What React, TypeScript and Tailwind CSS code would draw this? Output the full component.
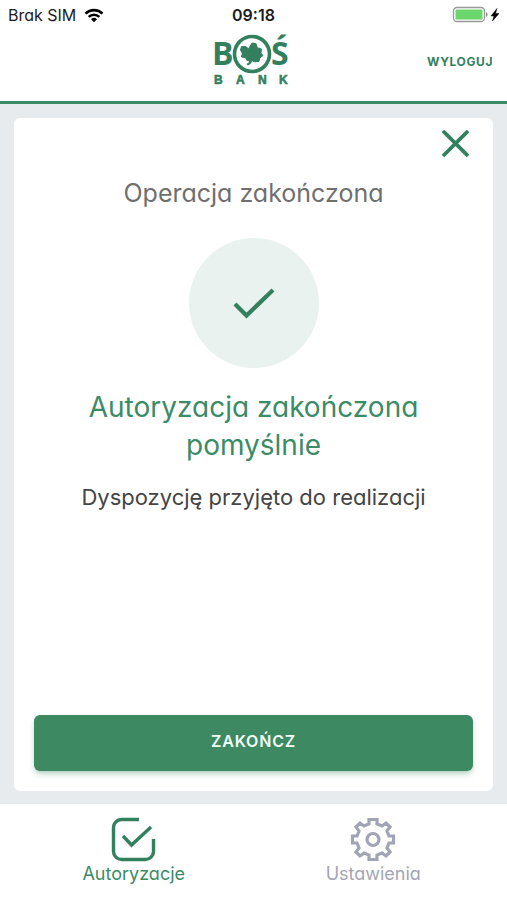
import React from 'react'

function StatusBar() {
  return (
    <div className="grid h-[30px] grid-cols-3 items-center px-2 text-base text-[#1c1c1c]">
      <div className="flex items-center gap-2">
        <span>Brak SIM</span>
        <svg width="20" height="15" viewBox="0 0 20 15" fill="none" aria-hidden="true">
          <path d="M1.5 5.6a12.2 12.2 0 0 1 17 0" stroke="#000" strokeWidth="2.6" />
          <path d="M4.7 8.9a7.6 7.6 0 0 1 10.6 0" stroke="#000" strokeWidth="2.5" />
          <path d="M10 14.2 7 11.3a4.3 4.3 0 0 1 6 0z" fill="#000" />
        </svg>
      </div>
      <span className="text-center font-semibold">09:18</span>
      <svg
        className="justify-self-end"
        width="48"
        height="18"
        viewBox="0 0 48 18"
        aria-hidden="true"
      >
        <rect x="2.5" y="1.5" width="31" height="14" rx="3.5" fill="#fff" stroke="#999" strokeWidth="1.3" />
        <rect x="4.5" y="3.5" width="27" height="10" rx="1" fill="#6bd66b" />
        <path d="M35 6c2 .8 2 4.2 0 5z" fill="#888" />
        <path d="m46 2.500-6 7.500h3l-1.500 5 6.500-7.500h-3.500z" fill="#000" stroke="#000" strokeWidth=".5" />
      </svg>
    </div>
  )
}

function Logo() {
  return (
    <svg width="84" height="60" viewBox="0 0 84 60" role="img" aria-label="BOŚ Bank" fill="#33805f">
      <g fontFamily="'Open Sans', sans-serif" fontWeight="700" fontSize="32">
        <text x="1" y="35">B</text>
        <text x="60" y="35">Ś</text>
      </g>
      <circle cx="41" cy="24" r="17.5" fill="#fff" stroke="#33805f" strokeWidth="3.6" />
      <path
        d="M30.500 16.500h4.500l2.500 2.500 3.500-6 4 .5 1.300 4.200 4.200 1.300-.6 4 2.100 2.500-3.200 2.500-.8 3.500-4.500.3-3-1.300c.3 2-1.500 4-3.800 4.300l-.8-.7c1.500-.3 2.700-1.500 2.800-3.100l-3-.8-1.200-2.700-4-.5.8-3.700-1.800-3.300z"
        stroke="#33805f"
        strokeWidth="1"
        strokeLinejoin="round"
      />
      <text
        x="3 25 47 68"
        y="54"
        fontFamily="'Liberation Sans', sans-serif"
        fontWeight="700"
        fontSize="12"
        stroke="#33805f"
        strokeWidth=".6"
      >
        BANK
      </text>
    </svg>
  )
}

function Header() {
  return (
    <header className="grid h-[74px] grid-cols-3 items-center border-b-3 border-[#3c8b67] px-[14px]">
      <div className="col-start-2 flex justify-center self-start">
        <Logo />
      </div>
      <button
        type="button"
        className="justify-self-end pb-2 text-xs font-bold tracking-wider text-[#33805f]"
      >
        WYLOGUJ
      </button>
    </header>
  )
}

function ResultCard() {
  return (
    <section className="flex flex-1 flex-col rounded-md bg-white px-5 pt-3 pb-5 text-center">
      <button type="button" aria-label="Zamknij" className="mr-1 self-end">
        <svg width="28" height="28" viewBox="0 0 28 28" stroke="#33805f" strokeWidth="3.8">
          <path d="m2 1 25 25M27 1 2 26" />
        </svg>
      </button>
      <h1 className="mt-4 text-[25px] leading-[38px] text-[#6f6f6f]">Operacja zakończona</h1>
      <div className="mt-[26px] flex size-[130px] items-center justify-center self-center rounded-full bg-[#e9f2ef]">
        <svg width="42" height="32" viewBox="0 0 42 32" fill="none" stroke="#33805f" strokeWidth="4.2" aria-hidden="true">
          <path d="m2 17 11.5 11.5L40 3" />
        </svg>
      </div>
      <h2 className="mx-auto mt-5 max-w-[360px] text-[28px] leading-[38px] text-[#3c8b67]">
        Autoryzacja zakończona pomyślnie
      </h2>
      <p className="mt-4 text-[22px] leading-[34px] text-[#444]">Dyspozycję przyjęto do realizacji</p>
      <button
        type="button"
        className="mt-auto h-14 rounded-md bg-[#3d8961] pb-1 text-base font-semibold tracking-wider text-[#f2fff8] shadow-md shadow-[#3d8961]/30"
      >
        ZAKOŃCZ
      </button>
    </section>
  )
}

function BottomNav() {
  return (
    <nav className="grid h-24 grid-cols-2 px-[14px] pt-3 text-lg leading-6">
      <a href="#autoryzacje" aria-current="page" className="flex flex-col items-center text-[#3c8b67]">
        <svg width="46" height="46" viewBox="0 0 46 46" fill="none" stroke="#33805f" strokeWidth="3.4" aria-hidden="true">
          <path d="M28 3.500H10.500A8 8 0 0 0 2.500 11.500v24A8 8 0 0 0 10.500 43.500h24a8 8 0 0 0 8-8V23" />
          <path d="m12 20 8.500 9L40 11" />
        </svg>
        Autoryzacje
      </a>
      <a href="#ustawienia" className="flex flex-col items-center text-[#a3a6b3]">
        <svg width="46" height="46" viewBox="0 0 46 46" fill="none" stroke="#a0a4b5" strokeWidth="3.2" aria-hidden="true">
          <path d="M19 3.500h8v4.500l5 2 4-3 4 4-3 4 2 5h4.500v7H39l-2 5 3 4-4 4-4-3-5 2v4.500h-8V39l-5-2-4 3-4-4 3-4-2-5H2.500v-7H7l2-5-3-4 4-4 4 3 5-2z" />
          <circle cx="23" cy="23.5" r="6" />
        </svg>
        Ustawienia
      </a>
    </nav>
  )
}

export default function App() {
  return (
    <div className="flex min-h-screen flex-col bg-white font-['Inter',sans-serif] [font-feature-settings:'cv11']">
      <StatusBar />
      <Header />
      <main className="flex flex-1 flex-col bg-[#e8ebee] px-[14px] pt-[14px] pb-[13px]">
        <ResultCard />
      </main>
      <BottomNav />
    </div>
  )
}
